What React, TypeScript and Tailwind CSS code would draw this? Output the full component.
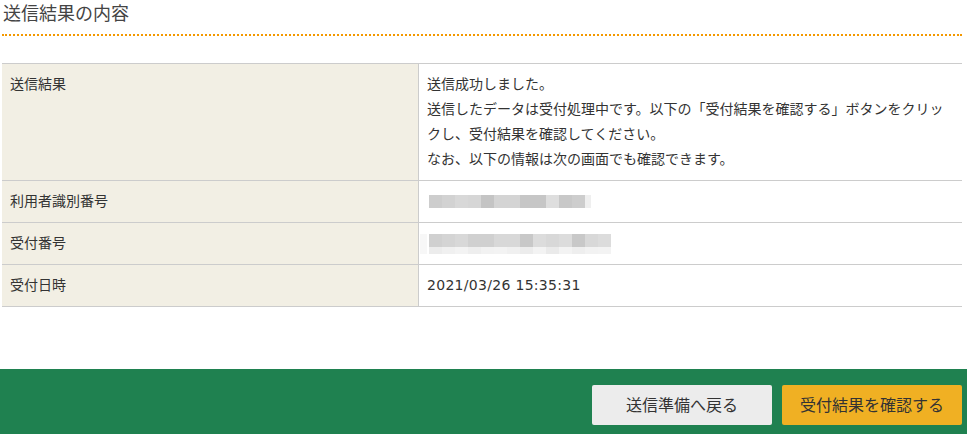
const row2Cells = [
  "#cdcdcd",
  "#d2d2d2",
  "#d8d8d8",
  "#d6d6d6",
  "#c4c4c4",
  "#d4d4d4",
  "#d4d4d4",
  "#c6c6c6",
  "#c6c6c6",
  "#dedede",
  "#c8c8c8",
  "#cdcdcd",
];

const row3Top = [
  "#d0d0d0",
  "#d4d4d4",
  "#d8d8d8",
  "#d0d0d0",
  "#d0d0d0",
  "#d8d8d8",
  "#d8d8d8",
  "#c8c8c8",
  "#dcdcdc",
  "#d8d8d8",
  "#dcdcdc",
  "#c8c8c8",
  "#d8d8d8",
  "#dcdcdc",
];

const row3Bottom = [
  "#ececec",
  "#f0f0f0",
  "#f3f3f3",
  "#eeeeee",
  "#f2f2f2",
  "#f3f3f3",
  "#f0f0f0",
  "#ececec",
  "#f3f3f3",
  "#eaeaea",
  "#f3f3f3",
  "#eeeeee",
  "#f2f2f2",
  "#f3f3f3",
];

// pixelated redaction blocks
const Mosaic = ({ top, bottom, tail }: { top: string[]; bottom?: string[]; tail?: boolean }) => (
  <div className="ml-[2px] flex flex-col">
    <div className="flex">
      {top.map((c, i) => (
        <div key={i} className="h-[13px] w-[13px]" style={{ backgroundColor: c }} />
      ))}
      {tail && <div className="h-[13px] w-[6px] bg-[#efefef]" />}
    </div>
    {bottom && (
      <div className="flex">
        {bottom.map((c, i) => (
          <div key={i} className="h-[7px] w-[13px]" style={{ backgroundColor: c }} />
        ))}
      </div>
    )}
  </div>
);

const Row = ({ label, children }: { label: string; children: React.ReactNode }) => (
  <div className="grid grid-cols-[416px_1fr] border-b border-[#cccccc]">
    <div className="bg-[#f2efe4] px-2 py-2">{label}</div>
    <div className="flex flex-col justify-center border-l border-[#cccccc] px-2 py-2">{children}</div>
  </div>
);

export default function App() {
  return (
    <div className="min-h-[434px] bg-white font-['DejaVu_Sans','Noto_Sans_CJK_JP',sans-serif] text-[14px] leading-[25px] text-[#333333]">
      <div className="ml-[2px] w-[960px]">
        <h2 className="border-b-2 border-dotted border-[#f39800] pb-[7px] pl-px text-[18px] leading-[27px] text-[#444444]">
          送信結果の内容
        </h2>

        <div className="mt-[27px] border-t border-[#cccccc]">
          <Row label="送信結果">
            <p>送信成功しました。</p>
            <p>
              送信したデータは受付処理中です。以下の「受付結果を確認する」ボタンをクリックし、受付結果を確認してください。
            </p>
            <p>なお、以下の情報は次の画面でも確認できます。</p>
          </Row>
          <Row label="利用者識別番号">
            <div className="flex h-[25px] items-center">
              <Mosaic top={row2Cells} tail />
            </div>
          </Row>
          <Row label="受付番号">
            <div className="flex h-[25px] items-center">
              <div className="-ml-[7px] flex">
                <div className="h-[20px] w-[7px] bg-[#f7f7f7]" />
                <Mosaic top={row3Top} bottom={row3Bottom} />
              </div>
            </div>
          </Row>
          <Row label="受付日時">
            <span className="tracking-[0.3px]">2021/03/26 15:35:31</span>
          </Row>
        </div>
      </div>

      <footer className="mt-[62px] flex justify-end gap-[10px] bg-[#1f8150] pt-4 pb-4 pr-[5px]">
        <button className="h-10 w-[180px] rounded-[2px] bg-[#ececec] text-[16px] text-[#333333]">
          送信準備へ戻る
        </button>
        <button className="h-10 w-[180px] rounded-[2px] bg-[#f0b023] text-[16px] text-[#333333]">
          受付結果を確認する
        </button>
      </footer>
    </div>
  );
}
